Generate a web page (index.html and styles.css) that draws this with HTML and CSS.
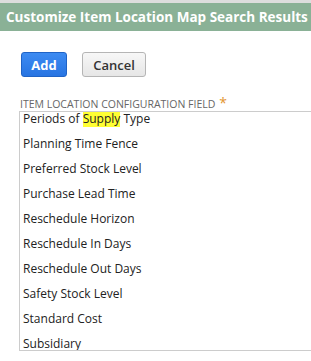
FILE: index.html
```html
<!DOCTYPE html>
<html lang="en">
<head>
    <meta charset="UTF-8">
    <title>Customize Item Location Map Search Results</title>
    <link rel="stylesheet" href="styles.css">
</head>
<body>
    <div class="page">
        <!-- Header band -->
        <div class="header">
            <h1 class="header-title">Customize Item Location Map Search Results</h1>
        </div>

        <!-- Buttons -->
        <div class="actions">
            <button class="btn btn-primary">Add</button>
            <button class="btn btn-secondary">Cancel</button>
        </div>

        <!-- Field -->
        <div class="field">
            <label class="field-label">Item Location Configuration Field <span class="required">*</span></label>
            <div class="list-box">
                <ul class="list">
                    <li class="list-item">Periods of <mark class="hit">Supply</mark> Type</li>
                    <li class="list-item">Planning Time Fence</li>
                    <li class="list-item">Preferred Stock Level</li>
                    <li class="list-item">Purchase Lead Time</li>
                    <li class="list-item">Reschedule Horizon</li>
                    <li class="list-item">Reschedule In Days</li>
                    <li class="list-item">Reschedule Out Days</li>
                    <li class="list-item">Safety Stock Level</li>
                    <li class="list-item">Standard Cost</li>
                    <li class="list-item">Subsidiary</li>
                </ul>
            </div>
        </div>
    </div>
</body>
</html>
```

FILE: styles.css
```css
* {
    margin: 0;
    padding: 0;
    box-sizing: border-box;
}

body {
    font-family: "Open Sans", "Liberation Sans", sans-serif;
    background: #ffffff;
    overflow: hidden;
}

.page {
    border-top: 3px solid #dddddd;
}

.header {
    background: #8ab196;
    height: 28px;
    display: flex;
    align-items: center;
    padding-left: 6px;
    white-space: nowrap;
    overflow: hidden;
}

.header-title {
    font-size: 13.5px;
    font-weight: bold;
    color: #ffffff;
}

.actions {
    display: flex;
    gap: 15px;
    padding: 21px 0 0 21px;
}

.btn {
    font-family: "Open Sans", "Liberation Sans", sans-serif;
    font-size: 13px;
    height: 25px;
    border-radius: 3px;
    cursor: pointer;
}

.btn-primary {
    width: 46px;
    font-weight: bold;
    color: #ffffff;
    background: linear-gradient(#3d8bf2, #2774e2);
    border: 1px solid #1f63c6;
}

.btn-secondary {
    width: 64px;
    font-weight: 600;
    color: #333333;
    background: linear-gradient(#f7f7f7, #e6e6e6);
    border: 1px solid #b5b5b5;
}

.field {
    padding: 19px 0 0 19px;
}

.field-label {
    display: block;
    font-size: 10.5px;
    color: #666666;
    text-transform: uppercase;
    line-height: 13px;
    padding-left: 1px;
}

.required {
    color: #e3952f;
    font-size: 14px;
    margin-left: 1px;
}

.list-box {
    border: 1px solid #cccccc;
    border-right: none;
    height: 240px;
    overflow: hidden;
}

.list {
    list-style: none;
    margin-top: -6px;
}

.list-item {
    height: 25px;
    line-height: 25px;
    padding-left: 3px;
    font-size: 12px;
    color: #222222;
}

.hit {
    background: #ffff33;
    color: #222222;
}
```
